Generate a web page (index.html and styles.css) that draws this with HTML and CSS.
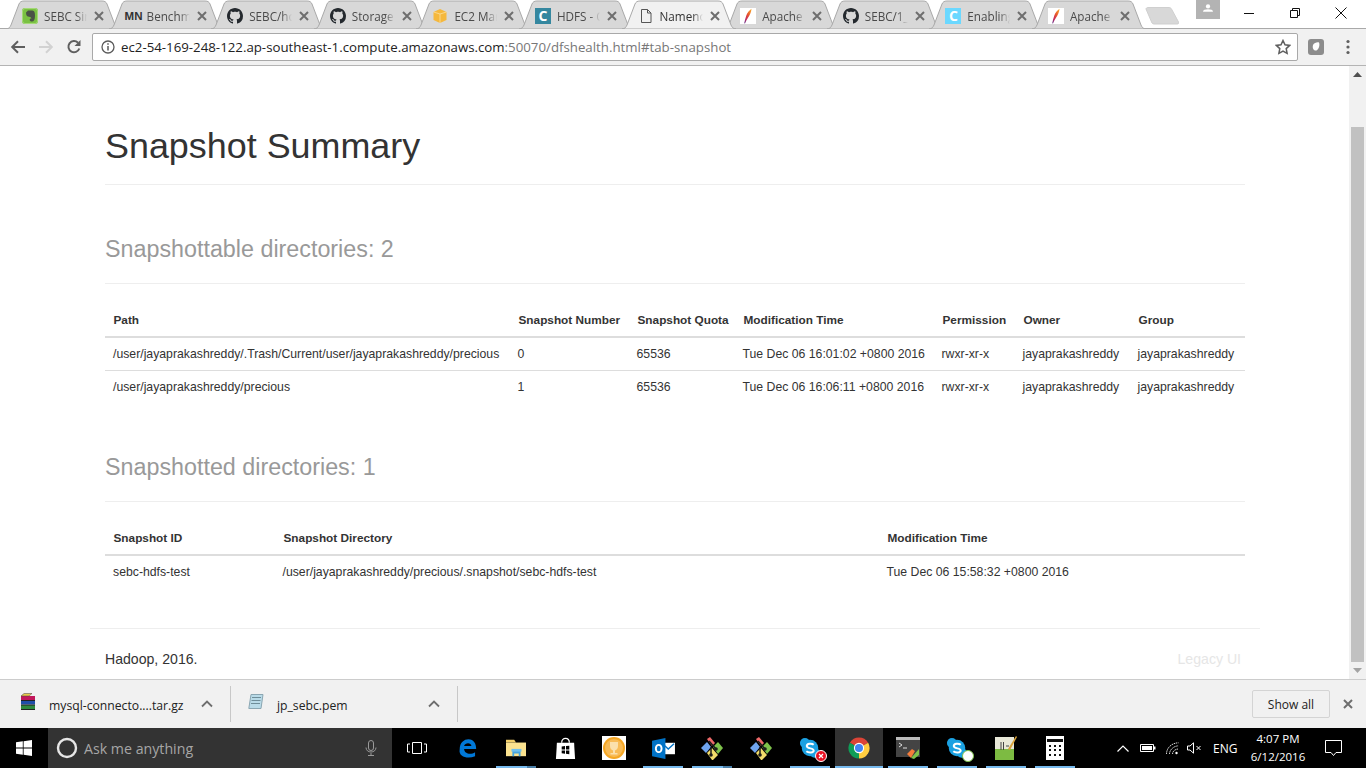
FILE: index.html
```html
<!DOCTYPE html>
<html lang="en">
<head>
<meta charset="utf-8">
<title>Namenode information</title>
<link rel="stylesheet" href="styles.css">
</head>
<body>
<svg class="defs" width="0" height="0" aria-hidden="true">
  <defs>
    <linearGradient id="featherfill" x1="0.8" y1="0" x2="0.2" y2="1">
      <stop offset="0" stop-color="#f6a32b"/>
      <stop offset=".4" stop-color="#e8552d"/>
      <stop offset=".75" stop-color="#c2285f"/>
      <stop offset="1" stop-color="#6d2e83"/>
    </linearGradient>
  </defs>
  <symbol id="tabshape" viewBox="0 0 114 29" preserveAspectRatio="none">
    <path d="M0 29C3 29 4 27 5 25L13 4C14 2 15 1 18 1H96C99 1 100 2 101 4L109 25C110 27 111 29 114 29Z"/>
  </symbol>
  <symbol id="github" viewBox="0 0 16 16">
    <path fill="#24292e" d="M8 0C3.58 0 0 3.58 0 8c0 3.54 2.29 6.53 5.47 7.59.4.07.55-.17.55-.38 0-.19-.01-.82-.01-1.49-2.01.37-2.53-.49-2.69-.94-.09-.23-.48-.94-.82-1.13-.28-.15-.68-.52-.01-.53.63-.01 1.08.58 1.23.82.72 1.21 1.87.87 2.33.66.07-.52.28-.87.51-1.07-1.78-.2-3.64-.89-3.64-3.95 0-.87.31-1.59.82-2.15-.08-.2-.36-1.02.08-2.12 0 0 .67-.21 2.2.82.64-.18 1.32-.27 2-.27.68 0 1.36.09 2 .27 1.53-1.04 2.2-.82 2.2-.82.44 1.1.16 1.92.08 2.12.51.56.82 1.27.82 2.15 0 3.07-1.87 3.75-3.65 3.95.29.25.54.73.54 1.48 0 1.07-.01 1.93-.01 2.2 0 .21.15.46.55.38A8.013 8.013 0 0016 8c0-4.42-3.58-8-8-8z"/>
  </symbol>
  <symbol id="feather" viewBox="0 0 16 16">
    <rect width="16" height="16" fill="#fff"/>
    <path fill="url(#featherfill)" d="M11.500 .8C9 2.500 7.300 5 6.300 7.500 5.500 9.800 4.800 12.500 4.200 15.300l.8.200C5.800 13.500 6.800 11.500 8 9.800 9.800 7.300 11.300 4 11.500 .8z"/>
  </symbol>
  <symbol id="close" viewBox="0 0 12 12">
    <path d="M2 2l8 8M10 2l-8 8" fill="none" stroke="#6e6e6e" stroke-width="2"/>
  </symbol>
  <symbol id="chev" viewBox="0 0 12 8">
    <path d="M1 6.500l5-5 5 5" fill="none" stroke="#6e6e6e" stroke-width="1.800"/>
  </symbol>
  <symbol id="gitext" viewBox="0 0 24 24">
    <path fill="#ef6a6a" d="M7 3l3-2 5 6-3 3z"/>
    <path fill="#6fa4ef" d="M1 12l6-6 4 5-5 6z"/>
    <path fill="#7ec24b" d="M13 11l5-5 5 6-5 6z"/>
    <path fill="#f1dc6b" d="M7 17l5-5 6 7-5 5h-1z"/>
    <path fill="none" stroke="#1c1c1c" stroke-width="1.500" d="M9 5l7 8M11 11v8"/>
    <circle cx="16" cy="13" r="1.800" fill="#1c1c1c"/><circle cx="11" cy="19" r="1.800" fill="#1c1c1c"/>
  </symbol>
  <symbol id="skype" viewBox="0 0 24 24">
    <circle cx="6.500" cy="6.500" r="5.500" fill="#1ba1e2"/>
    <circle cx="17" cy="17" r="5.500" fill="#1ba1e2"/>
    <circle cx="12" cy="12" r="9" fill="#1ba1e2"/>
    <path d="M16 8.500C14 6.800 8.500 7 8.500 9.800c0 3.400 7.500 1.800 7.500 5 0 2.600-5.500 2.800-8 .8" fill="none" stroke="#fff" stroke-width="2.200"/>
  </symbol>
</svg>

<div class="app">
  <div class="tabstrip">
    <div class="tabs">
      <div class="tab"><svg class="tabbg"><use href="#tabshape"/></svg>
        <svg class="fav" viewBox="0 0 16 16"><rect width="16" height="16" rx="3" fill="#7ac143"/><rect x=".5" y=".5" width="15" height="15" rx="2.500" fill="none" stroke="#a4d977"/><path fill="#4a5246" d="M4 4.500L6 2.500h3.500c2.500 0 3.500 1 3.500 5 0 4-1 6-3 6-1.500 0-2.300-.8-2.300-1.800 0-1 1-1.300 1.800-1.200-.6-1.500-2-1.800-3.500-2-1-.1-2-1.500-2-4z"/></svg>
        <span class="title">SEBC Sin</span><svg class="x"><use href="#close"/></svg></div>
      <div class="tab"><svg class="tabbg"><use href="#tabshape"/></svg>
        <span class="fav mn">MN</span>
        <span class="title">Benchm</span><svg class="x"><use href="#close"/></svg></div>
      <div class="tab"><svg class="tabbg"><use href="#tabshape"/></svg>
        <svg class="fav"><use href="#github"/></svg>
        <span class="title">SEBC/hc</span><svg class="x"><use href="#close"/></svg></div>
      <div class="tab"><svg class="tabbg"><use href="#tabshape"/></svg>
        <svg class="fav"><use href="#github"/></svg>
        <span class="title">Storage</span><svg class="x"><use href="#close"/></svg></div>
      <div class="tab"><svg class="tabbg"><use href="#tabshape"/></svg>
        <svg class="fav" viewBox="0 0 16 16"><path fill="#f5b83d" d="M8 1l6.500 3v8L8 15l-6.500-3V4z"/><path d="M8 6v9M8 6L1.500 4M8 6l6.500-2" stroke="#fbe0a0" stroke-width=".8" fill="none"/></svg>
        <span class="title">EC2 Man</span><svg class="x"><use href="#close"/></svg></div>
      <div class="tab"><svg class="tabbg"><use href="#tabshape"/></svg>
        <span class="fav letter letter-teal">C</span>
        <span class="title">HDFS - C</span><svg class="x"><use href="#close"/></svg></div>
      <div class="tab active"><svg class="tabbg"><use href="#tabshape"/></svg>
        <svg class="fav" viewBox="0 0 16 16"><path d="M3.500 1.500h6l3.500 3.500v9.500h-9.500zM9.500 1.500V5H13" fill="none" stroke="#555" stroke-width="1"/></svg>
        <span class="title">Namenode</span><svg class="x"><use href="#close"/></svg></div>
      <div class="tab"><svg class="tabbg"><use href="#tabshape"/></svg>
        <svg class="fav"><use href="#feather"/></svg>
        <span class="title">Apache</span><svg class="x"><use href="#close"/></svg></div>
      <div class="tab"><svg class="tabbg"><use href="#tabshape"/></svg>
        <svg class="fav"><use href="#github"/></svg>
        <span class="title">SEBC/1_</span><svg class="x"><use href="#close"/></svg></div>
      <div class="tab"><svg class="tabbg"><use href="#tabshape"/></svg>
        <span class="fav letter letter-sky">C</span>
        <span class="title">Enabling</span><svg class="x"><use href="#close"/></svg></div>
      <div class="tab"><svg class="tabbg"><use href="#tabshape"/></svg>
        <svg class="fav"><use href="#feather"/></svg>
        <span class="title">Apache</span><svg class="x"><use href="#close"/></svg></div>
    </div>
    <svg class="newtab" viewBox="0 0 34 18"><path d="M1 2C1 1 2 .5 3 .5H24C25 .5 26 1 26.500 2L33.500 15C34 16.500 33.500 17 32 17H9C8 17 7.500 16.500 7 16z" fill="#d8d8d8" stroke="#cfcfcf"/></svg>
    <div class="profile"><svg viewBox="0 0 16 12" width="10" height="8"><circle cx="8" cy="3.500" r="3.400" fill="#fff"/><path d="M0 12c0-3 3.500-4 8-4s8 1 8 4z" fill="#fff"/></svg></div>
    <div class="winctl">
      <svg class="wc" viewBox="0 0 12 12"><path d="M1 6.500h10" stroke="#111" fill="none"/></svg>
      <svg class="wc" viewBox="0 0 12 12"><path d="M1.500 3.500h7v7h-7zM3.500 3.500v-2h7v7h-2" stroke="#111" fill="none"/></svg>
      <svg class="wc" viewBox="0 0 12 12"><path d="M.5.500l11 11M11.500.500l-11 11" stroke="#111" fill="none"/></svg>
    </div>
  </div>

  <div class="toolbar">
    <svg class="tb-ic" viewBox="0 0 16 16"><path d="M15 8H2.500M8 2.200L2.200 8 8 13.800" fill="none" stroke="#5f5f5f" stroke-width="2"/></svg>
    <svg class="tb-ic" viewBox="0 0 16 16"><path d="M1 8h12.500M8 2.200L13.800 8 8 13.800" fill="none" stroke="#d2d2d2" stroke-width="2"/></svg>
    <svg class="tb-ic" viewBox="0 0 16 16"><path d="M13.300 9.500A5.600 5.600 0 1 1 12 3.700" fill="none" stroke="#5f5f5f" stroke-width="2"/><path d="M14.500 1v6h-6z" fill="#5f5f5f"/></svg>
    <div class="omnibox">
      <svg class="info" viewBox="0 0 14 14"><circle cx="7" cy="7" r="6" fill="none" stroke="#5a5a5a" stroke-width="1.300"/><path d="M7 6v4.500M7 3.300v1.500" stroke="#5a5a5a" stroke-width="1.500"/></svg>
      <span class="url"><span class="host">ec2-54-169-248-122.ap-southeast-1.compute.amazonaws.com</span>:50070/dfshealth.html#tab-snapshot</span>
      <svg class="star" viewBox="0 0 16 16"><path d="M8 1.500l2 4.300 4.700.6-3.500 3.200.9 4.700L8 12l-4.100 2.300.9-4.700L1.300 6.400 6 5.800z" fill="none" stroke="#5f5f5f" stroke-width="1.500"/></svg>
    </div>
    <svg class="ext" viewBox="0 0 16 16"><rect width="16" height="16" rx="3" fill="#8c8c8c"/><path d="M5 6c1-2 4-3 6-2.500C12 6 11 10 8.500 11.500 6 12 4 9.500 5 6z" fill="#fff"/></svg>
    <svg class="menu" viewBox="0 0 4 16"><circle cx="2" cy="2.500" r="1.600" fill="#5f5f5f"/><circle cx="2" cy="8" r="1.600" fill="#5f5f5f"/><circle cx="2" cy="13.500" r="1.600" fill="#5f5f5f"/></svg>
  </div>

  <div class="viewport">
    <main class="page">
      <div class="container">
        <h1 class="summary">Snapshot Summary</h1>

        <h2 class="section-title">Snapshottable directories: 2</h2>
        <table class="grid">
          <colgroup><col class="c1"><col class="c2"><col class="c3"><col class="c4"><col class="c5"><col class="c6"><col class="c7"></colgroup>
          <thead><tr><th>Path</th><th>Snapshot Number</th><th>Snapshot Quota</th><th>Modification Time</th><th>Permission</th><th>Owner</th><th>Group</th></tr></thead>
          <tbody>
            <tr><td>/user/jayaprakashreddy/.Trash/Current/user/jayaprakashreddy/precious</td><td>0</td><td>65536</td><td>Tue Dec 06 16:01:02 +0800 2016</td><td>rwxr-xr-x</td><td>jayaprakashreddy</td><td>jayaprakashreddy</td></tr>
            <tr><td>/user/jayaprakashreddy/precious</td><td>1</td><td>65536</td><td>Tue Dec 06 16:06:11 +0800 2016</td><td>rwxr-xr-x</td><td>jayaprakashreddy</td><td>jayaprakashreddy</td></tr>
          </tbody>
        </table>

        <h2 class="section-title">Snapshotted directories: 1</h2>
        <table class="grid">
          <colgroup><col class="d1"><col class="d2"><col class="d3"></colgroup>
          <thead><tr><th>Snapshot ID</th><th>Snapshot Directory</th><th>Modification Time</th></tr></thead>
          <tbody>
            <tr><td>sebc-hdfs-test</td><td>/user/jayaprakashreddy/precious/.snapshot/sebc-hdfs-test</td><td>Tue Dec 06 15:58:32 +0800 2016</td></tr>
          </tbody>
        </table>
      </div>
      <footer class="foot">
        <span>Hadoop, 2016.</span>
        <a class="legacy">Legacy UI</a>
      </footer>
    </main>
    <div class="scrollbar">
      <svg class="sb-arrow" viewBox="0 0 9 5"><path d="M0 5L4.500 0 9 5z" fill="#505050"/></svg>
      <div class="sb-track"><div class="sb-thumb"></div></div>
      <svg class="sb-arrow" viewBox="0 0 9 5"><path d="M0 0L4.500 5 9 0z" fill="#a3a3a3"/></svg>
    </div>
  </div>

  <div class="downloads">
    <div class="dl dl-first">
      <svg class="dl-ic" viewBox="0 0 16 17"><path fill="#c2185b" d="M1 3h14v4H1z"/><path fill="#1f4fa8" d="M1 7.500h14v4H1z"/><path fill="#2e8b3d" d="M1 12h14v4H1z"/><path d="M1 7.500h14M1 12h14M1 16.500h14" stroke="#222"/><path fill="#e8c84a" stroke="#444" stroke-width=".5" d="M1 3l3-2.500h8L9 3z"/></svg>
      <span class="dl-name">mysql-connecto....tar.gz</span>
      <svg class="dl-chev"><use href="#chev"/></svg>
    </div>
    <div class="dl dl-second">
      <svg class="dl-ic" viewBox="0 0 16 17"><path fill="#b9dbe8" stroke="#8aa6b2" d="M3 1.500h12l-2 14H.8z"/><path stroke="#6e8d99" d="M4 4.500h9M3.500 7.500h9M3 10.500h9" fill="none"/></svg>
      <span class="dl-name">jp_sebc.pem</span>
      <svg class="dl-chev"><use href="#chev"/></svg>
    </div>
    <button class="showall">Show all</button>
    <svg class="dl-close"><use href="#close"/></svg>
  </div>

  <div class="taskbar">
    <div class="start"><svg viewBox="0 0 16 16" width="16" height="16"><path fill="#fff" d="M0 2.300l6.800-1v6.300H0zM7.600 1.200L16 0v7.600H7.600zM0 8.400h6.800v6.300L0 13.700zM7.600 8.400H16V16l-8.400-1.200z"/></svg></div>
    <div class="search">
      <svg class="cortana" viewBox="0 0 22 22"><circle cx="11" cy="11" r="9" fill="none" stroke="#e6e6e6" stroke-width="2.400"/></svg>
      <span class="ask">Ask me anything</span>
      <svg class="mic" viewBox="0 0 12 16"><rect x="3.500" y=".5" width="5" height="10" rx="2.500" fill="none" stroke="#9a9a9a"/><path d="M1 7.500c0 6 10 6 10 0M6 13v2.500M3 15.500h6" fill="none" stroke="#9a9a9a"/></svg>
    </div>
    <div class="taskview"><svg viewBox="0 0 20 14" width="20" height="14"><path d="M5.500 1.500h9v11h-9zM3 3H.5v8H3M17 3h2.500v8H17" fill="none" stroke="#fff"/></svg></div>
    <div class="tk"><svg viewBox="0 0 24 24" width="22" height="22"><path d="M4 13.500C4 6 9 2.500 13.500 2.500c6 0 8.500 5 8.500 10.500H8.800c.3 5.500 7.500 6.500 12 3.500v4.500C13 24 2.500 22 4 13.500zM8.800 9.700h8C16.500 6 10 6 8.800 9.700z" fill="#0078d7"/></svg></div>
    <div class="tk on split"><svg viewBox="0 0 24 22" width="22" height="20"><path d="M1 2h9l2 3H1z" fill="#f2cf6a"/><path d="M1 5h22v15H1z" fill="#fbe28f"/><path d="M8 14h9v6h-2v-3H10v3H8z" fill="#45a4df"/><path d="M7 12h11v3H7z" fill="#70c1ee"/></svg></div>
    <div class="tk"><svg viewBox="0 0 22 24" width="21" height="23"><path d="M7 6c0-6 8-6 8 0" fill="none" stroke="#fff" stroke-width="1.300"/><path d="M2 6h18l1 17H1z" fill="#fff"/><path d="M7 10l3.500-.5v3.500H7zM11.500 9.300L15 9v4h-3.500zM7 14h3.500v3.500L7 17zM11.500 14H15v4l-3.500-.5z" fill="#000"/></svg></div>
    <div class="tk"><svg viewBox="0 0 24 24" width="24" height="24"><rect width="24" height="24" fill="#fff"/><circle cx="12" cy="12" r="11" fill="#f5a623"/><circle cx="12" cy="12" r="9" fill="#f8bb57"/><path d="M8 6h8v4c0 3-2 4-3 4.500V17h2.500v1.500h-7V17H11v-2.500C10 14 8 13 8 10z" fill="#fbe0ad"/></svg></div>
    <div class="tk on"><svg viewBox="0 0 24 22" width="23" height="21"><path d="M10 5h14v12H10z" fill="#fff"/><path d="M11 6l6 5.500L23 6" fill="none" stroke="#0072c6" stroke-width="1.500"/><path d="M0 3l14-3v22L0 19z" fill="#0072c6"/><ellipse cx="7" cy="11" rx="3" ry="3.800" fill="none" stroke="#fff" stroke-width="2"/></svg></div>
    <div class="tk on split"><svg width="24" height="24"><use href="#gitext"/></svg></div>
    <div class="tk"><svg width="24" height="24"><use href="#gitext"/></svg></div>
    <div class="tk on badge-wrap"><svg width="22" height="22"><use href="#skype"/></svg>
      <svg class="badge" viewBox="0 0 12 12"><circle cx="6" cy="6" r="5.500" fill="#e81123" stroke="#fff"/><path d="M4 4l4 4M8 4l-4 4" stroke="#fff" stroke-width="1.200"/></svg></div>
    <div class="tk on active"><svg viewBox="0 0 24 24" width="22" height="22"><path d="M12 12L21.960 6.250A11.500 11.500 0 0 0 2.040 6.250Z" fill="#db4437"/><path d="M12 12L2.040 6.250A11.500 11.500 0 0 0 12 23.500Z" fill="#0f9d58"/><path d="M12 12L12 23.500A11.500 11.500 0 0 0 21.960 6.250Z" fill="#ffcd40"/><circle cx="12" cy="12" r="5.600" fill="#fff"/><circle cx="12" cy="12" r="4.400" fill="#4285f4"/></svg></div>
    <div class="tk on"><svg viewBox="0 0 24 22" width="24" height="22"><rect width="24" height="20" fill="#444"/><rect width="24" height="3" fill="#bbb"/><path d="M3 6l3 2-3 2M7 11h4" stroke="#ddd" fill="none"/><path d="M11 17l5-5 3 2-4 7z" fill="#f57c3a"/><path d="M15 21l8-9v6l-5 4z" fill="#7ec24b"/></svg></div>
    <div class="tk on badge-wrap"><svg width="22" height="22"><use href="#skype"/></svg>
      <svg class="badge" viewBox="0 0 12 12"><circle cx="6" cy="6" r="5.500" fill="#fff" stroke="#7ec24b"/></svg></div>
    <div class="tk on"><svg viewBox="0 0 22 24" width="22" height="24"><rect y="1" width="19" height="23" fill="#e8e8d8"/><rect y="13" width="19" height="11" fill="#7dbb42"/><path d="M6 6v8M8.500 6v8M11 10h3" stroke="#444" fill="none"/><path d="M21 0l-8 13 2 1L22 1z" fill="#d9a23a"/></svg></div>
    <div class="tk on"><svg viewBox="0 0 18 24" width="18" height="24"><rect width="18" height="24" fill="#fff"/><rect x="1" y="3" width="16" height="3" fill="#111"/><path d="M3 9h2v2H3zM8 9h2v2H8zM13 9h2v2h-2zM3 13h2v2H3zM8 13h2v2H8zM13 13h2v2h-2zM3 18h2v2H3zM8 18h2v2H8zM13 18h2v2h-2z" fill="#111"/></svg></div>
    <div class="tray">
      <svg class="ti ti-chev" viewBox="0 0 12 7" width="12" height="7"><path d="M.5 6.500L6 1l5.500 5.500" fill="none" stroke="#fff" stroke-width="1.200"/></svg>
      <svg class="ti ti-batt" viewBox="0 0 16 10" width="16" height="10"><path d="M.5 1.500h13v7H.5z" fill="none" stroke="#fff"/><path d="M2 3h10v4H2z" fill="#fff"/><path d="M14 3.500h1.500v3H14z" fill="#fff"/></svg>
      <svg class="ti ti-wifi" viewBox="0 0 13 13" width="13" height="13"><path d="M.5 12C.5 6 5.500 1 12.500 .8M3.500 12C3.500 8 7.500 4 12.500 3.800M6.500 12C6.500 9.500 9 7 12.500 7" fill="none" stroke="#d8d8d8" stroke-dasharray="1.500 .7"/><circle cx="10.500" cy="11" r="1.200" fill="#fff"/></svg>
      <svg class="ti ti-vol" viewBox="0 0 15 12" width="15" height="12"><path d="M.5 4h2.500L6.500.8v10.400L3 8H.5z" fill="none" stroke="#fff"/><path d="M9.500 4l4 4M13.500 4l-4 4" stroke="#fff" fill="none"/></svg>
      <span class="lang">ENG</span>
      <div class="clock"><span>4:07 PM</span><span>6/12/2016</span></div>
      <svg class="notif" viewBox="0 0 18 17" width="18" height="17"><path d="M.5.500h16v12h-5.500l-2.500 3-2.500-3H.5z" fill="none" stroke="#fff"/></svg>
    </div>
  </div>
</div>
</body>
</html>
```
FILE: styles.css
```css
* { box-sizing: border-box; }
html, body { margin: 0; height: 100%; overflow: hidden; background: #fff; }
body { font-family: "Liberation Sans", Arial, sans-serif; color: #333; }
.defs { position: absolute; }
.app { width: 1366px; height: 768px; display: flex; flex-direction: column; }

/* Tab strip */
.tabstrip { height: 28px; display: flex; align-items: flex-start; background: #fff; position: relative; z-index: 1; flex: none; }
.tabs { display: flex; padding-left: 6px; }
.tab { position: relative; width: 113.6px; height: 29px; margin-right: -11px; flex: none; display: flex; align-items: center; padding: 2px 0 0 16px; font: 11.7px "Open Sans", sans-serif; color: #4a4a4a; }
.tabbg { position: absolute; left: 0; top: 0; width: 114px; height: 29px; fill: #d8d8d8; stroke: #a9a9a9; stroke-width: 1; overflow: visible; }
.tab.active { z-index: 2; color: #333; }
.tab.active .tabbg { fill: #f1f1f1; }
.fav { position: relative; width: 16px; height: 16px; flex: none; }
.mn { font: bold 11.5px/16px "Liberation Sans", sans-serif; color: #333; width: 16px; white-space: nowrap; }
.letter { font: bold 14px/16px "Open Sans", sans-serif; color: #fff; text-align: center; }
.letter-teal { background: #35879f; }
.letter-sky { background: #6bd8ff; }
.title { position: relative; width: 43px; margin-left: 6px; white-space: nowrap; overflow: hidden; -webkit-mask-image: linear-gradient(90deg, #000 76%, transparent); mask-image: linear-gradient(90deg, #000 76%, transparent); }
.x { position: relative; width: 12px; height: 12px; margin-left: 6px; flex: none; }

.newtab { width: 34px; height: 18px; margin: 7px 0 0 10px; flex: none; }
.profile { width: 24px; height: 19px; margin-left: 17px; background: #b3b3b3; display: flex; align-items: center; justify-content: center; flex: none; padding-bottom: 3px; }
.winctl { margin-left: auto; display: flex; gap: 34px; padding: 7px 19px 0 0; }
.wc { width: 12px; height: 12px; flex: none; }

/* Toolbar */
.toolbar { height: 38px; flex: none; background: #f1f1f1; border-top: 1px solid #a9a9a9; border-bottom: 1px solid #b4b4b4; display: flex; align-items: center; padding-left: 10px; }
.tb-ic { width: 16px; height: 16px; flex: none; margin-right: 12px; }
.omnibox { width: 1206px; height: 28px; margin-left: -2px; flex: none; background: #fff; border: 1px solid #a9a9a9; border-radius: 2px; display: flex; align-items: center; padding: 0 6px 0 8px; }
.info { width: 14px; height: 14px; flex: none; }
.url { margin-left: 6px; font: 13.28px "Open Sans", sans-serif; color: #777; white-space: nowrap; }
.host { color: #222; }
.star { width: 16px; height: 16px; margin-left: auto; flex: none; }
.ext { width: 16px; height: 16px; margin-left: 10px; flex: none; }
.menu { width: 4px; height: 16px; margin-left: 22px; flex: none; }

/* Page */
.viewport { flex: 1; min-height: 0; display: flex; overflow: hidden; }
.page { flex: 1; min-width: 0; overflow: hidden; padding-top: 60px; }
.container { width: 1170px; margin-left: 90px; padding: 0 15px; }
.summary { margin: 0; padding-bottom: 18px; border-bottom: 1px solid #eee; font-size: 35.9px; line-height: 40px; font-weight: 400; color: #333; }
.section-title { margin: 51px 0 20px; padding-bottom: 21px; border-bottom: 1px solid #eee; font-size: 23.3px; line-height: 26px; font-weight: 400; color: #999; }
.grid { width: 1140px; table-layout: fixed; border-collapse: separate; border-spacing: 0; font-size: 12.25px; line-height: 16px; }
.grid th { text-align: left; padding: 8px 0 8px 8.5px; border-bottom: 2px solid #ddd; font-size: 11.8px; font-weight: 700; white-space: nowrap; }
.grid td { padding: 8px 0 8px 8px; white-space: nowrap; }
.grid td + td { padding-left: 7.5px; }
.grid tr + tr td { border-top: 1px solid #ddd; }
.c1 { width: 405px; } .c2 { width: 119px; } .c3 { width: 106px; } .c4 { width: 199px; } .c5 { width: 81px; } .c6 { width: 115px; } .c7 { width: 115px; }
.d1 { width: 170px; } .d2 { width: 604px; } .d3 { width: 366px; }
.foot { width: 1170px; margin: 40px 0 0 90px; padding: 20px 19px 0 15px; border-top: 1px solid #eee; display: flex; justify-content: space-between; font-size: 14.1px; line-height: 20px; }
.legacy { color: #e6e6e6; }

.scrollbar { width: 17px; flex: none; background: #f1f1f1; display: flex; flex-direction: column; align-items: center; }
.sb-arrow { width: 9px; height: 5px; margin: 6px 0; flex: none; }
.sb-track { flex: 1; width: 100%; padding-top: 44px; }
.sb-thumb { margin: 0 auto; width: 13px; height: 535px; background: #c1c1c1; }

/* Downloads */
.downloads { height: 49px; flex: none; background: #f1f1f1; border-top: 1px solid #ccc; display: flex; align-items: center; font: 12.2px "Open Sans", sans-serif; color: #222; }
.dl { height: 36px; display: flex; align-items: center; border-right: 1px solid #c8c8c8; flex: none; position: relative; }
.dl-first { width: 231px; padding-left: 20px; }
.dl-second { width: 227px; padding-left: 17px; }
.dl-ic { width: 16px; height: 17px; flex: none; margin-top: -6px; }
.dl-name { margin: 3px 0 0 13px; white-space: nowrap; }
.dl-chev { width: 12px; height: 8px; margin-left: auto; margin-right: 17px; flex: none; }
.showall { width: 78px; height: 28px; margin-left: auto; padding: 0; background: #f1f1f1; border: 1px solid #d4d4d4; border-radius: 2px; font: 500 12px "Open Sans", sans-serif; color: #222; }
.dl-close { width: 12px; height: 12px; margin: 0 12px 0 12px; flex: none; }

/* Taskbar */
.taskbar { height: 40px; flex: none; background: #000; display: flex; align-items: stretch; color: #fff; }
.start { width: 48px; display: flex; align-items: center; justify-content: center; flex: none; }
.search { width: 344px; background: #333; display: flex; align-items: center; padding: 0 15px 0 8px; flex: none; }
.cortana { width: 22px; height: 22px; flex: none; }
.ask { margin-left: 6px; font: 14.2px "Open Sans", sans-serif; color: #a6a6a6; }
.mic { width: 12px; height: 16px; margin-left: auto; flex: none; }
.taskview { width: 51px; padding-right: 2px; flex: none; display: flex; align-items: center; justify-content: center; }
.tk { position: relative; width: 48px; margin-right: 1px; flex: none; display: flex; align-items: center; justify-content: center; }
.tk.on::after { content: ""; position: absolute; left: 4px; right: 4px; bottom: 0; height: 2px; background: #76b9ed; }
.tk.split::before { content: ""; position: absolute; right: 4px; bottom: 0; width: 9px; height: 2px; background: #4a7fa8; z-index: 1; }
.tk.active { background: #333; }
.tk.active::after { left: 0; right: 0; }
.badge { position: absolute; width: 12px; height: 12px; left: 29px; top: 22px; }
.tray { margin-left: auto; display: flex; align-items: center; padding-right: 23px; font: 11.5px "Open Sans", sans-serif; }
.ti { flex: none; }
.ti-batt { margin-left: 11px; }
.ti-wifi { margin-left: 10px; }
.ti-vol { margin-left: 8px; }
.lang { margin-left: 11px; width: 24px; font-size: 12px; white-space: nowrap; }
.clock { width: 60px; margin-left: 11px; display: flex; flex-direction: column; align-items: center; line-height: 18px; white-space: nowrap; }
.notif { margin-left: 17px; flex: none; }
```
